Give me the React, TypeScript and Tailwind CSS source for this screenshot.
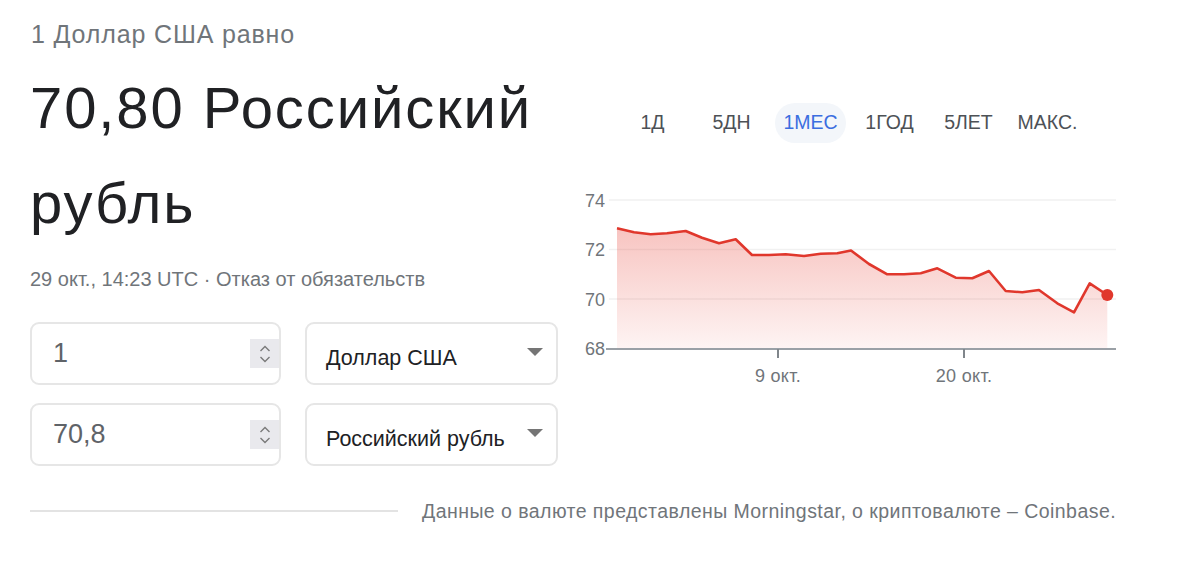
import React from "react";

const pts: [number, number][] = [
  [618, 228.3], [635, 232.3], [651.7, 234.3], [668, 233.3], [686.7, 231], [703, 237.7],
  [720, 243.3], [736.7, 239.3], [753, 255], [770, 255], [786.7, 254.3], [805, 256],
  [821.7, 253.7], [838.3, 253.3], [852, 250.5], [870, 264], [888.3, 274.3], [905, 274.3],
  [921.7, 273.3], [938.3, 268.3], [956.7, 277.7], [973.3, 278.3], [990, 271], [1006.7, 291],
  [1023.3, 292.3], [1040, 290], [1058.3, 303.3], [1075, 312.3], [1090.7, 283.3], [1108.3, 295],
];

function Chart() {
  const line = pts.map((p, i) => `${i === 0 ? "M" : "L"}${p[0]} ${p[1]}`).join(" ");
  const area = `${line} L1108.3 349 L618 349 Z`;
  return (
    <svg width="550" height="210" viewBox="575 185 550 210" className="block">
      <defs>
        <linearGradient id="fillg" x1="0" y1="0" x2="0" y2="1">
          <stop offset="0%" stopColor="#e8473c" stopOpacity="0.32" />
          <stop offset="100%" stopColor="#e8473c" stopOpacity="0.06" />
        </linearGradient>
      </defs>
      {[200, 249.5, 299].map((y) => (
        <line key={y} x1="610" x2="1117" y1={y} y2={y} stroke="#f1f1f1" strokeWidth="1.5" />
      ))}
      <path d={area} fill="url(#fillg)" />
      <path d={line} fill="none" stroke="#e0372c" strokeWidth="2.6" strokeLinejoin="round" />
      <circle cx="1108.3" cy="295" r="6" fill="#e0372c" />
      <line x1="607" x2="1117" y1="349" y2="349" stroke="#9aa0a6" strokeWidth="2" />
      <line x1="779" x2="779" y1="349" y2="358" stroke="#80868b" strokeWidth="2" />
      <line x1="965" x2="965" y1="349" y2="358" stroke="#80868b" strokeWidth="2" />
      <g fill="#70757a" fontSize="18" fontFamily="'Liberation Sans', Arial, sans-serif">
        <text x="586" y="207">74</text>
        <text x="586" y="256">72</text>
        <text x="586" y="306">70</text>
        <text x="586" y="355">68</text>
        <text x="779" y="382" textAnchor="middle" letterSpacing="0.3">9 окт.</text>
        <text x="965" y="382" textAnchor="middle" letterSpacing="0.3">20 окт.</text>
      </g>
    </svg>
  );
}

function NumInput({ value }: { value: string }) {
  return (
    <div className="flex h-[63px] w-[251px] items-center justify-between rounded-[9px] border-2 border-[#e6e6e6] pl-[21px] pr-0">
      <span className="text-[27px] leading-none text-[#5f6368]">{value}</span>
      <div className="flex h-[29px] w-[29px] flex-col items-center justify-center bg-[#e9e9ed]">
        <svg width="14" height="22" viewBox="0 0 14 22">
          <path d="M2.5 8 L7 3.5 L11.5 8" fill="none" stroke="#7a7a7a" strokeWidth="1.4" />
          <path d="M2.5 14 L7 18.5 L11.5 14" fill="none" stroke="#7a7a7a" strokeWidth="1.4" />
        </svg>
      </div>
    </div>
  );
}

function Select({ label }: { label: string }) {
  return (
    <div className="flex h-[63px] w-[253px] items-center justify-between rounded-[9px] border-2 border-[#e6e6e6] pl-[19px] pr-[13px]">
      <span className="pt-[10px] text-[21.5px] leading-none text-[#202124]">{label}</span>
      <svg width="16" height="8" viewBox="0 0 16 8" className="mb-[3px]">
        <path d="M0 0 L16 0 L8 8 Z" fill="#757575" />
      </svg>
    </div>
  );
}

export default function App() {
  const periods = ["1Д", "5ДН", "1МЕС", "1ГОД", "5ЛЕТ", "МАКС."];
  return (
    <div className="h-[585px] w-[1200px] overflow-hidden bg-white font-['Liberation_Sans',Arial,sans-serif]">
      <div className="pl-[31px] pt-[19px] text-[25px] leading-[30px] tracking-[0.85px] text-[#70757a]">
        1 Доллар США равно
      </div>
      <div className="mt-[11px] flex">
        <div className="w-[574px] shrink-0 pl-[30px]">
          <div className="text-[58px] leading-[95px] tracking-[1.9px] text-[#202124]">
            70,80 Российский рубль
          </div>
          <div className="mt-[17px] text-[20px] leading-[24px] text-[#70757a]">
            29 окт., 14:23 UTC · Отказ от обязательств
          </div>
          <div className="mt-[31px] grid w-[530px] grid-cols-[251px_253px] gap-x-[24px] gap-y-[18px]">
            <NumInput value="1" />
            <Select label="Доллар США" />
            <NumInput value="70,8" />
            <Select label="Российский рубль" />
          </div>
        </div>
        <div className="flex flex-col">
          <div className="mt-[43px] flex gap-[8px] pl-[43px]">
            {periods.map((p) => (
              <div
                key={p}
                className={
                  p === "1МЕС"
                    ? "flex h-10 w-[71px] items-center justify-center rounded-full bg-[#f3f6fa] text-[19.5px] text-[#3b6ee0]"
                    : "flex h-10 w-[71px] items-center justify-center rounded-full text-[19.5px] text-[#4d5156]"
                }
              >
                {p}
              </div>
            ))}
          </div>
          <div className="mt-[42px]">
            <Chart />
          </div>
        </div>
      </div>
      <div className="mt-[33px] flex items-center pl-[30px]">
        <div className="h-[2px] w-[368px] bg-[#e3e3e3]" />
        <div className="ml-[24px] text-[19.5px] leading-[24px] tracking-[0.45px] text-[#70757a]">
          Данные о валюте представлены Morningstar, о криптовалюте – Coinbase.
        </div>
      </div>
    </div>
  );
}
